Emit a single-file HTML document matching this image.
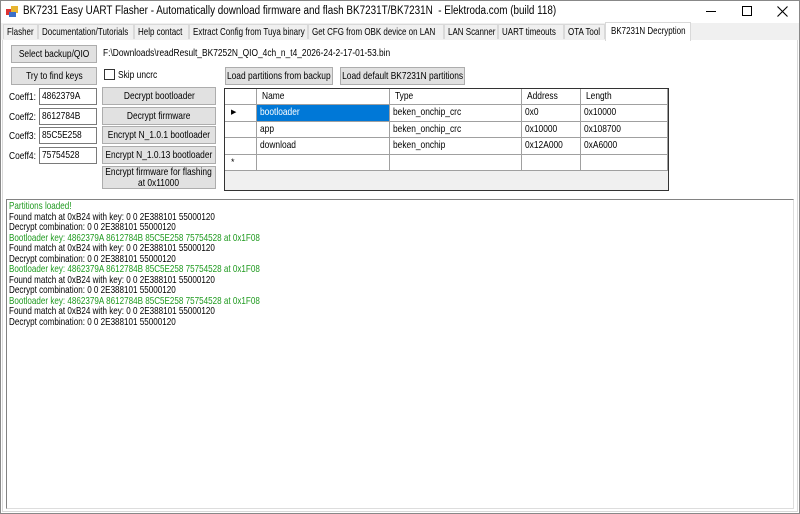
<!DOCTYPE html>
<html><head><meta charset="utf-8"><style>
*{box-sizing:border-box;margin:0;padding:0}
body{width:800px;height:514px;overflow:hidden;background:#fff;font-family:"Liberation Sans",sans-serif;font-size:11px;color:#000;position:relative}
.a{position:absolute;white-space:nowrap}
span.s{display:inline-block;transform:scaleX(.8);transform-origin:left center;white-space:nowrap}
span.c{display:inline-block;transform:scaleX(.8);transform-origin:center center;white-space:nowrap;text-align:center}
.btn{position:absolute;background:#e1e1e1;border:1px solid #adadad;font-size:10.5px;line-height:15px;white-space:nowrap;display:flex;justify-content:center;align-items:center}
.tb{position:absolute;border:1px solid #7a7a7a;background:#fff;font-size:10.5px;line-height:14px;padding-left:2px;height:17px;white-space:nowrap;overflow:hidden}
.tab{position:absolute;top:24px;height:15px;border:1px solid #d9d9d9;border-bottom:none;background:#f0f0f0;font-size:10.5px;line-height:14px;padding-left:3px;white-space:nowrap;overflow:hidden}
.tab span.s{transform:scaleX(.76)}
.cell{position:absolute;border-right:1px solid #a0a0a0;border-bottom:1px solid #a0a0a0;font-size:10.5px;line-height:15px;padding-left:3px;background:#fff;white-space:nowrap;overflow:hidden}
.log div{height:10.5px;line-height:10.5px;font-size:10.5px;white-space:nowrap;transform:scaleX(.77);transform-origin:left center}
.g{color:#1f9a1f}
</style></head><body>
<div class="a" style="left:0;top:0;width:800px;height:23px;background:#fff"></div>
<svg class="a" style="left:6px;top:5px" width="14" height="13"><rect x="0" y="4" width="6" height="6" fill="#d33"/><rect x="5" y="1" width="7" height="7" fill="#e8b530"/><rect x="3" y="7" width="7" height="5" fill="#3a6fc8"/></svg>
<div class="a" style="left:23px;top:5px;font-size:11.5px"><span class="s" style="transform:scaleX(.86)">BK7231 Easy UART Flasher - Automatically download firmware and flash BK7231T/BK7231N&nbsp; - Elektroda.com (build 118)</span></div>
<div class="a" style="left:706px;top:11px;width:10px;height:1px;background:#000"></div>
<div class="a" style="left:742px;top:6px;width:10px;height:10px;border:1px solid #000"></div>
<svg class="a" style="left:777px;top:6px" width="11" height="11"><path d="M0.5 0.5L10.5 10.5M10.5 0.5L0.5 10.5" stroke="#000" stroke-width="1.1"/></svg>
<div class="a" style="left:0;top:23px;width:800px;height:17px;background:#f0f0f0"></div>
<div class="tab" style="left:3px;width:35px"><span class="s">Flasher</span></div>
<div class="tab" style="left:38px;width:96px"><span class="s">Documentation/Tutorials</span></div>
<div class="tab" style="left:134px;width:55px"><span class="s">Help contact</span></div>
<div class="tab" style="left:189px;width:119px"><span class="s">Extract Config from Tuya binary</span></div>
<div class="tab" style="left:308px;width:136px"><span class="s">Get CFG from OBK device on LAN</span></div>
<div class="tab" style="left:444px;width:54px"><span class="s">LAN Scanner</span></div>
<div class="tab" style="left:498px;width:66px"><span class="s">UART timeouts</span></div>
<div class="tab" style="left:564px;width:41px"><span class="s">OTA Tool</span></div>
<div class="tab" style="left:605px;top:22px;height:19px;width:86px;background:#fff;line-height:16px;padding-left:5px"><span class="s">BK7231N Decryption</span></div>
<div class="a" style="left:2px;top:40px;width:796px;height:472px;border:1px solid #d9d9d9;border-top:none"></div>
<div class="a" style="left:0;top:0;width:800px;height:514px;border:1px solid #888"></div>
<div class="btn" style="left:11px;top:45px;width:86px;height:18px"><span class="c">Select backup/QIO</span></div>
<div class="a" style="left:103px;top:48px;font-size:10px"><span class="s" style="transform:scaleX(.84)">F:\Downloads\readResult_BK7252N_QIO_4ch_n_t4_2026-24-2-17-01-53.bin</span></div>
<div class="btn" style="left:11px;top:67px;width:86px;height:18px"><span class="c">Try to find keys</span></div>
<div class="a" style="left:104px;top:69px;width:11px;height:11px;border:1px solid #333;background:#fff"></div>
<div class="a" style="left:118px;top:69px;font-size:10.5px"><span class="s">Skip uncrc</span></div>
<div class="btn" style="left:225px;top:67px;width:108px;height:18px"><span class="c">Load partitions from backup</span></div>
<div class="btn" style="left:340px;top:67px;width:125px;height:18px"><span class="c">Load default BK7231N partitions</span></div>
<div class="a" style="left:9px;top:91px;font-size:10.5px"><span class="s">Coeff1:</span></div>
<div class="a" style="left:9px;top:111px;font-size:10.5px"><span class="s">Coeff2:</span></div>
<div class="a" style="left:9px;top:130px;font-size:10.5px"><span class="s">Coeff3:</span></div>
<div class="a" style="left:9px;top:150px;font-size:10.5px"><span class="s">Coeff4:</span></div>
<div class="tb" style="left:39px;top:88px;width:58px"><span class="s">4862379A</span></div>
<div class="tb" style="left:39px;top:108px;width:58px"><span class="s">8612784B</span></div>
<div class="tb" style="left:39px;top:127px;width:58px"><span class="s">85C5E258</span></div>
<div class="tb" style="left:39px;top:147px;width:58px"><span class="s">75754528</span></div>
<div class="btn" style="left:102px;top:87px;width:114px;height:18px"><span class="c">Decrypt bootloader</span></div>
<div class="btn" style="left:102px;top:107px;width:114px;height:18px"><span class="c">Decrypt firmware</span></div>
<div class="btn" style="left:102px;top:126px;width:114px;height:18px"><span class="c">Encrypt N_1.0.1 bootloader</span></div>
<div class="btn" style="left:102px;top:146px;width:114px;height:18px"><span class="c">Encrypt N_1.0.13 bootloader</span></div>
<div class="btn" style="left:102px;top:166px;width:114px;height:23px;line-height:10.5px"><span class="c">Encrypt firmware for flashing<br>at 0x11000</span></div>
<div class="a" style="left:224px;top:88px;width:445px;height:103px;border:1px solid #333;background:#f0f0f0;overflow:hidden">
 <div style="position:relative">
  <div class="cell" style="left:0;top:0;width:32px;height:16px"></div>
  <div class="cell" style="left:32px;top:0;width:133px;height:16px;padding-left:5px"><span class="s">Name</span></div>
  <div class="cell" style="left:165px;top:0;width:132px;height:16px;padding-left:5px"><span class="s">Type</span></div>
  <div class="cell" style="left:297px;top:0;width:59px;height:16px;padding-left:5px"><span class="s">Address</span></div>
  <div class="cell" style="left:356px;top:0;width:87px;height:16px;padding-left:5px"><span class="s">Length</span></div>
  <div class="cell" style="left:0;top:16px;width:32px;height:17px;padding-left:6px;font-size:7px">&#9654;</div>
  <div class="cell" style="left:32px;top:16px;width:133px;height:17px;background:#0078d7;color:#fff"><span class="s">bootloader</span></div>
  <div class="cell" style="left:165px;top:16px;width:132px;height:17px"><span class="s">beken_onchip_crc</span></div>
  <div class="cell" style="left:297px;top:16px;width:59px;height:17px"><span class="s">0x0</span></div>
  <div class="cell" style="left:356px;top:16px;width:87px;height:17px"><span class="s">0x10000</span></div>
  <div class="cell" style="left:0;top:33px;width:32px;height:16px"></div>
  <div class="cell" style="left:32px;top:33px;width:133px;height:16px"><span class="s">app</span></div>
  <div class="cell" style="left:165px;top:33px;width:132px;height:16px"><span class="s">beken_onchip_crc</span></div>
  <div class="cell" style="left:297px;top:33px;width:59px;height:16px"><span class="s">0x10000</span></div>
  <div class="cell" style="left:356px;top:33px;width:87px;height:16px"><span class="s">0x108700</span></div>
  <div class="cell" style="left:0;top:49px;width:32px;height:17px"></div>
  <div class="cell" style="left:32px;top:49px;width:133px;height:17px"><span class="s">download</span></div>
  <div class="cell" style="left:165px;top:49px;width:132px;height:17px"><span class="s">beken_onchip</span></div>
  <div class="cell" style="left:297px;top:49px;width:59px;height:17px"><span class="s">0x12A000</span></div>
  <div class="cell" style="left:356px;top:49px;width:87px;height:17px"><span class="s">0xA6000</span></div>
  <div class="cell" style="left:0;top:66px;width:32px;height:16px;padding-left:6px;font-size:9px">*</div>
  <div class="cell" style="left:32px;top:66px;width:133px;height:16px"></div>
  <div class="cell" style="left:165px;top:66px;width:132px;height:16px"></div>
  <div class="cell" style="left:297px;top:66px;width:59px;height:16px"></div>
  <div class="cell" style="left:356px;top:66px;width:87px;height:16px"></div>
 </div>
</div>
<div class="a log" style="left:6px;top:199px;width:788px;height:310px;border:1px solid #828282;border-right-color:#ddd;border-bottom-color:#ddd;padding:1px 0 0 2px">
<div class="g">Partitions loaded!</div>
<div>Found match at 0xB24 with key: 0 0 2E388101 55000120</div>
<div>Decrypt combination: 0 0 2E388101 55000120</div>
<div class="g">Bootloader key: 4862379A 8612784B 85C5E258 75754528 at 0x1F08</div>
<div>Found match at 0xB24 with key: 0 0 2E388101 55000120</div>
<div>Decrypt combination: 0 0 2E388101 55000120</div>
<div class="g">Bootloader key: 4862379A 8612784B 85C5E258 75754528 at 0x1F08</div>
<div>Found match at 0xB24 with key: 0 0 2E388101 55000120</div>
<div>Decrypt combination: 0 0 2E388101 55000120</div>
<div class="g">Bootloader key: 4862379A 8612784B 85C5E258 75754528 at 0x1F08</div>
<div>Found match at 0xB24 with key: 0 0 2E388101 55000120</div>
<div>Decrypt combination: 0 0 2E388101 55000120</div>
</div>
</body></html>
